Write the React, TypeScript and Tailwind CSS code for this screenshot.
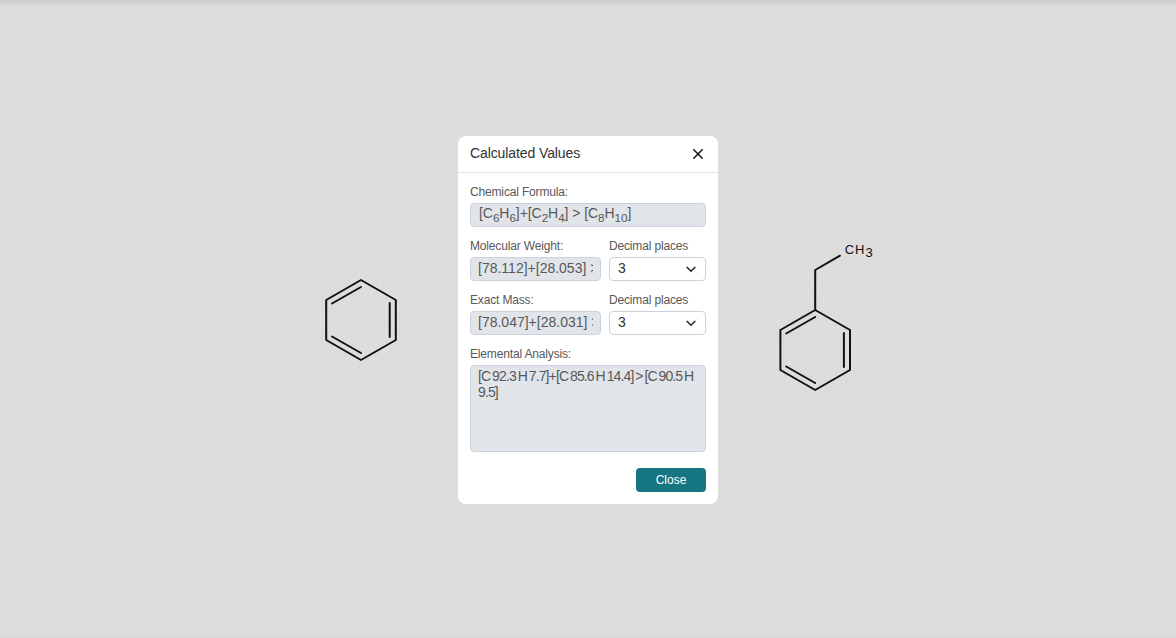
import type { ReactNode } from 'react';

function Benzene({ x, y }: { x: number; y: number }) {
  return (
    <g transform={`translate(${x} ${y})`}>
      <path d="M0 -40 L34.8 -20 V20 L0 40 L-34.8 20 V-20 Z" />
      <path d="M0 -33 L-29 -16.5 M28.7 -17 V17 M0 33 L-29 16.5" />
    </g>
  );
}

function Molecules() {
  return (
    <svg className="absolute inset-0 h-full w-full" viewBox="0 0 1176 638" fill="none" stroke="#111" strokeWidth="2" strokeLinecap="round" strokeLinejoin="round">
      <Benzene x={361} y={320} />
      <Benzene x={815.2} y={350} />
      <path d="M815.2 310 V270 L840 255.7" />
      <g fill="#111" stroke="none" fontFamily="Liberation Sans, sans-serif" fontSize="13">
        <text x="844.8" y="254" letterSpacing="0.8">CH</text>
        <text x="865.6" y="257">3</text>
      </g>
    </svg>
  );
}

function Label({ children }: { children: ReactNode }) {
  return <div className="h-[22px] pt-[4px] text-[12px] leading-[14px] tracking-[-0.16px] whitespace-nowrap text-[#585858]">{children}</div>;
}

const box = 'rounded-[4px] border border-[#cad3dd]';

function ValueRow({ label, value }: { label: string; value: string }) {
  return (
    <div className="mb-[8px] flex gap-2">
      <div className="w-[131px]">
        <Label>{label}</Label>
        <div className={`${box} h-6 bg-[#e1e5ea] px-[7px]`}>
          <input
            readOnly
            value={value}
            className="block h-[20px] w-full bg-transparent p-0 text-[14px] leading-[20px] text-[#585858] outline-none"
          />
        </div>
      </div>
      <div className="w-[97px]">
        <Label>Decimal places</Label>
        <div className={`${box} flex h-6 items-center justify-between bg-white pr-[9px] pl-[8px] text-[14px] leading-[21px] text-[#333]`}>
          <span className="-mt-[2px]">3</span>
          <svg className="mt-px h-[7px] w-[10px]" viewBox="0 0 10 7" fill="none" stroke="#222" strokeWidth="1.5">
            <path d="M.7 1 L5 5.3 L9.3 1" />
          </svg>
        </div>
      </div>
    </div>
  );
}

export default function App() {
  return (
    <main className="relative flex h-[638px] w-full items-start justify-center overflow-hidden bg-[#dddddd] bg-[repeating-linear-gradient(135deg,#dddddd_0px,#dddddd_7.6px,#dadada_8.8px,#dddddd_9.9px)] pt-[136px] font-['Liberation_Sans',Arial,sans-serif]">
      <div className="absolute inset-x-0 top-0 h-[7px] bg-linear-to-b from-[#cbcbcb] to-transparent" />
      <div className="absolute bottom-0 left-0 h-px w-full bg-[#d8d8d8]" />
      <Molecules />
      <section className="relative h-[368px] w-[260px] rounded-lg bg-white">
        <header className="flex h-[37px] items-center justify-between border-b border-[#e1e5ea] pr-[15px] pl-3">
          <h1 className="-mt-[2px] text-[14px] leading-4 tracking-[-0.1px] text-[#333]">Calculated Values</h1>
          <svg className="h-[10px] w-[10px]" viewBox="0 0 10 10" fill="none" stroke="#111" strokeWidth="1.5">
            <path d="M.3 .3 L9.7 9.7 M9.7 .3 L.3 9.7" />
          </svg>
        </header>
        <div className="px-3 pt-[8px]">
          <div className="mb-[8px]">
            <Label>Chemical Formula:</Label>
            <div className={`${box} h-6 bg-[#e1e5ea] pl-2 text-[14px] leading-[19px] tracking-[-0.06px] whitespace-nowrap text-[#585858] [&_sub]:bottom-[-4px] [&_sub]:text-[11.67px]`}>
              [C<sub>6</sub>H<sub>6</sub>]+[C<sub>2</sub>H<sub>4</sub>] &gt; [C<sub>8</sub>H<sub>10</sub>]
            </div>
          </div>
          <ValueRow label="Molecular Weight:" value="[78.112]+[28.053] > [106.165]" />
          <ValueRow label="Exact Mass:" value="[78.047]+[28.031] > [106.078]" />
          <Label>Elemental Analysis:</Label>
          <div className={`${box} h-[87px] bg-[#e1e5ea] px-[7px] pt-[2px] text-[14px] leading-4 tracking-[-0.88px] whitespace-nowrap text-[#585858] [word-spacing:-1.15px]`}>
            [C 92.3 H 7.7]+[C 85.6 H 14.4] &gt; [C 90.5 H<br />9.5]
          </div>
          <button className="mt-4 ml-auto block h-6 w-[70px] rounded-[4px] bg-[#167782] text-[12px] leading-[24px] text-white">Close</button>
        </div>
      </section>
    </main>
  );
}
